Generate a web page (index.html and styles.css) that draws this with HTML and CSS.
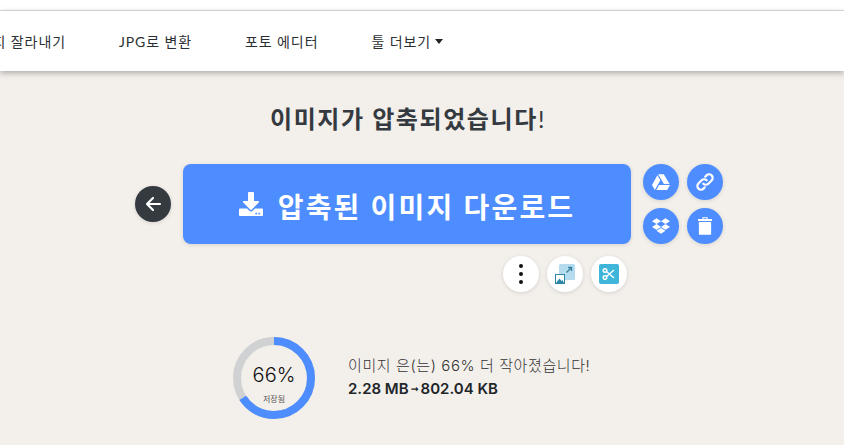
FILE: index.html
```html
<!DOCTYPE html>
<html lang="ko">
<head>
    <meta charset="UTF-8">
    <meta name="viewport" content="width=device-width, initial-scale=1.0">
    <title>이미지 압축</title>
    <link rel="stylesheet" href="styles.css">
</head>
<body>
    <!-- Top navigation -->
    <div class="top-strip"></div>
    <nav class="nav">
        <a class="nav-item nav-first" href="#">이미지 잘라내기</a>
        <a class="nav-item" href="#">JPG로 변환</a>
        <a class="nav-item" href="#">포토 에디터</a>
        <a class="nav-item" href="#">툴 더보기<span class="caret"></span></a>
    </nav>

    <main class="content">
        <h1 class="title">이미지가 압축되었습니다<span class="title-mark">!</span></h1>

        <!-- Download row -->
        <div class="action-row">
            <a class="round-btn back-btn" href="#">
                <svg class="icon-back" viewBox="0 0 18 18"><path d="M16 9H3M9 3 3 9l6 6" fill="none" stroke="#fff" stroke-width="2.2" stroke-linecap="round" stroke-linejoin="round"/></svg>
            </a>
            <a class="download-btn" href="#">
                <svg class="icon-download" viewBox="0 0 512 512"><path fill="#fff" d="M216 0h80c13.3 0 24 10.7 24 24v168h87.7c17.8 0 26.7 21.5 14.1 34.1L269.7 378.3c-7.5 7.5-19.8 7.5-27.3 0L90.1 226.1c-12.6-12.6-3.7-34.1 14.1-34.1H192V24c0-13.3 10.7-24 24-24zm296 376v112c0 13.3-10.7 24-24 24H24c-13.3 0-24-10.7-24-24V376c0-13.3 10.7-24 24-24h146.7l49 49c20.1 20.1 52.5 20.1 72.6 0l49-49H488c13.3 0 24 10.7 24 24zm-124 88c0-11-9-20-20-20s-20 9-20 20 9 20 20 20 20-9 20-20zm64 0c0-11-9-20-20-20s-20 9-20 20 9 20 20 20 20-9 20-20z"/></svg>
                <span class="download-label">압축된 이미지 다운로드</span>
            </a>
            <div class="share-grid">
                <a class="round-btn blue-btn" href="#">
                    <svg class="icon-sm" viewBox="0 0 512 512"><path fill="#fff" d="M339 314.9L175.4 32h161.2l163.6 282.9H339zm-137.5 23.6L120.9 480h310.5L512 338.5H201.5zM154.1 67.4L0 338.5 80.6 480 237 208.8 154.1 67.4z"/></svg>
                </a>
                <a class="round-btn blue-btn" href="#">
                    <svg class="icon-link" viewBox="0 0 20 20"><g fill="none" stroke="#fff" stroke-width="2.2" stroke-linecap="round"><path d="M8.300 11.700a3.600 3.600 0 0 0 5.100 0l3.200-3.200a3.600 3.600 0 0 0-5.100-5.100L10.200 4.700"/><path d="M11.700 8.300a3.600 3.600 0 0 0-5.100 0l-3.200 3.200a3.600 3.600 0 0 0 5.100 5.100l1.300-1.300"/></g></svg>
                </a>
                <a class="round-btn blue-btn" href="#">
                    <svg class="icon-sm" viewBox="0 0 528 512"><path fill="#fff" d="M264.4 116.3l-132 84.3 132 84.3-132 84.3L0 284.1l132.3-84.3L0 116.3 132.3 32l132.1 84.3zM131.6 395.7l132-84.3 132 84.3-132 84.3-132-84.3zm132.8-111l132-84.3-132-83.6L395.7 32 528 116.3l-132.3 84.3L528 284.8l-132.3 84.3-131.3-84.4z"/></svg>
                </a>
                <a class="round-btn blue-btn" href="#">
                    <svg class="icon-trash" viewBox="0 0 16 20"><path fill="#fff" d="M5 0h6v2h5v2.400H0V2h5zM6.200 1v1h3.600V1zM1 5.400h14V19a1 1 0 0 1-1 1H2a1 1 0 0 1-1-1z"/></svg>
                </a>
            </div>
        </div>

        <!-- More tools -->
        <div class="tool-row">
            <a class="round-btn white-btn" href="#">
                <span class="dots"><i></i><i></i><i></i></span>
            </a>
            <a class="round-btn white-btn" href="#">
                <svg class="icon-tool" viewBox="0 0 20 20">
                    <rect x="4" y="0" width="16" height="16" rx="1.500" fill="#b4dcee"/>
                    <path d="M11.500 8.500 16.500 3.500M13 3.500h3.500V7" fill="none" stroke="#3b7f9e" stroke-width="1.300"/>
                    <rect x="0" y="10" width="10" height="10" fill="#2e87a8"/>
                    <rect x="1" y="11" width="8" height="8" fill="#fff"/>
                    <path d="M1 19 4.500 14.500 6.500 17 7.500 16 9 19z" fill="#2e87a8"/>
                </svg>
            </a>
            <a class="round-btn white-btn" href="#">
                <svg class="icon-tool" viewBox="0 0 20 20">
                    <rect width="20" height="20" rx="2" fill="#3fb5da"/>
                    <g fill="none" stroke="#fff" stroke-width="1.400">
                        <circle cx="6" cy="6.500" r="1.800"/>
                        <circle cx="6" cy="13.500" r="1.800"/>
                        <path d="M7.500 7.500 15 14M7.500 12.500 15 6"/>
                    </g>
                </svg>
            </a>
        </div>

        <!-- Savings stats -->
        <div class="stats">
            <div class="ring">
                <svg class="ring-svg" viewBox="0 0 84 84">
                    <circle cx="42" cy="42" r="37" fill="none" stroke="#d0d1d2" stroke-width="8"/>
                    <circle cx="42" cy="42" r="37" fill="none" stroke="#4d8dff" stroke-width="8" pathLength="100" stroke-dasharray="66 100" transform="rotate(-90 42 42)"/>
                </svg>
                <div class="ring-label">
                    <span class="ring-value">66%</span>
                    <span class="ring-caption">저장됨</span>
                </div>
            </div>
            <div class="stats-text">
                <p class="stats-line">이미지 은(는) 66% 더 작아졌습니다!</p>
                <p class="stats-size">2.28 MB<span class="arrow">➞</span>802.04 KB</p>
            </div>
        </div>
    </main>
</body>
</html>
```

FILE: styles.css
```css
* {
    box-sizing: border-box;
}
html, body {
    height: 100%;
}
body {
    margin: 0;
    overflow: hidden;
    background-color: #f3efeb;
    font-family: Lato, "Noto Sans CJK KR", sans-serif;
    color: #212529;
}
a {
    text-decoration: none;
    color: inherit;
}
.top-strip {
    height: 11px;
    background-color: #fff;
    border-bottom: 1px solid #dcdcdc;
}
.nav {
    display: flex;
    align-items: center;
    gap: 53px;
    height: 60px;
    background-color: #fff;
    box-shadow: 0 2px 6px rgba(0, 0, 0, 0.3);
    overflow: hidden;
}
.nav-item {
    flex: none;
    font-size: 14px;
    letter-spacing: 0.9px;
    color: #2b2f33;
}
.nav-first {
    margin-left: -35px;
}
.caret {
    display: inline-block;
    margin-left: 4px;
    vertical-align: 3px;
    border-top: 5px solid #212529;
    border-left: 4px solid transparent;
    border-right: 4px solid transparent;
}
.content {
    padding-top: 33px;
}
.title {
    width: 816px;
    height: 30px;
    margin: 0 0 30px;
    line-height: 30px;
    text-align: center;
    font-size: 24px;
    font-weight: 700;
    letter-spacing: 1.6px;
    color: #343a40;
}
.title-mark {
    font-weight: 400;
}
.action-row {
    display: flex;
    align-items: center;
    gap: 12px;
    margin-left: 135px;
}
.round-btn {
    display: flex;
    align-items: center;
    justify-content: center;
    flex: none;
    width: 36px;
    height: 36px;
    border-radius: 50%;
    box-shadow: 0 1px 4px rgba(0, 0, 0, 0.12);
}
.back-btn {
    background-color: #343a40;
}
.blue-btn {
    background-color: #4d8dff;
}
.white-btn {
    background-color: #fff;
}
.icon-back {
    width: 18px;
    height: 18px;
}
.download-btn {
    display: flex;
    align-items: center;
    justify-content: center;
    gap: 15px;
    width: 448px;
    height: 80px;
    border-radius: 8px;
    background-color: #4d8dff;
    box-shadow: 0 1px 4px rgba(0, 0, 0, 0.12);
    color: #fff;
    font-size: 28px;
    font-weight: 700;
    letter-spacing: 2.2px;
}
.download-label {
    padding-top: 4px;
}
.icon-download {
    width: 24px;
    height: 24px;
}
.share-grid {
    display: grid;
    grid-template-columns: 36px 36px;
    gap: 8px;
}
.icon-sm {
    width: 18px;
    height: 18px;
}
.icon-link {
    width: 20px;
    height: 20px;
}
.icon-trash {
    width: 14px;
    height: 18px;
}
.tool-row {
    display: flex;
    justify-content: flex-end;
    gap: 8px;
    width: 627px;
    margin-top: 12px;
}
.dots {
    display: flex;
    flex-direction: column;
    gap: 4px;
}
.dots i {
    display: block;
    width: 4px;
    height: 4px;
    border-radius: 50%;
    background-color: #111;
}
.icon-tool {
    width: 20px;
    height: 20px;
}
.stats {
    display: flex;
    align-items: center;
    gap: 32px;
    margin-top: 44px;
    margin-left: 232px;
}
.ring {
    position: relative;
    width: 84px;
    height: 84px;
}
.ring-svg {
    display: block;
    width: 84px;
    height: 84px;
}
.ring-label {
    position: absolute;
    inset: 0;
    display: flex;
    flex-direction: column;
    align-items: center;
    padding-top: 27px;
}
.ring-value {
    font-family: Inter, sans-serif;
    font-size: 20px;
    line-height: 24px;
    font-weight: 300;
    color: #111;
}
.ring-caption {
    margin-top: 7px;
    font-size: 8px;
    line-height: 10px;
    color: #555;
}
.stats-text {
    margin-top: -3px;
}
.stats-line {
    margin: 0;
    font-family: Inter, "Noto Sans CJK KR", sans-serif;
    font-size: 15px;
    line-height: 20px;
    font-weight: 300;
    letter-spacing: 0.6px;
    color: #333;
}
.stats-size {
    margin: 4px 0 0;
    font-family: Inter, sans-serif;
    font-size: 15px;
    line-height: 18px;
    font-weight: 600;
    color: #212529;
}
.arrow {
    margin: 0 2px;
    font-size: 9px;
    vertical-align: 2px;
}
```
